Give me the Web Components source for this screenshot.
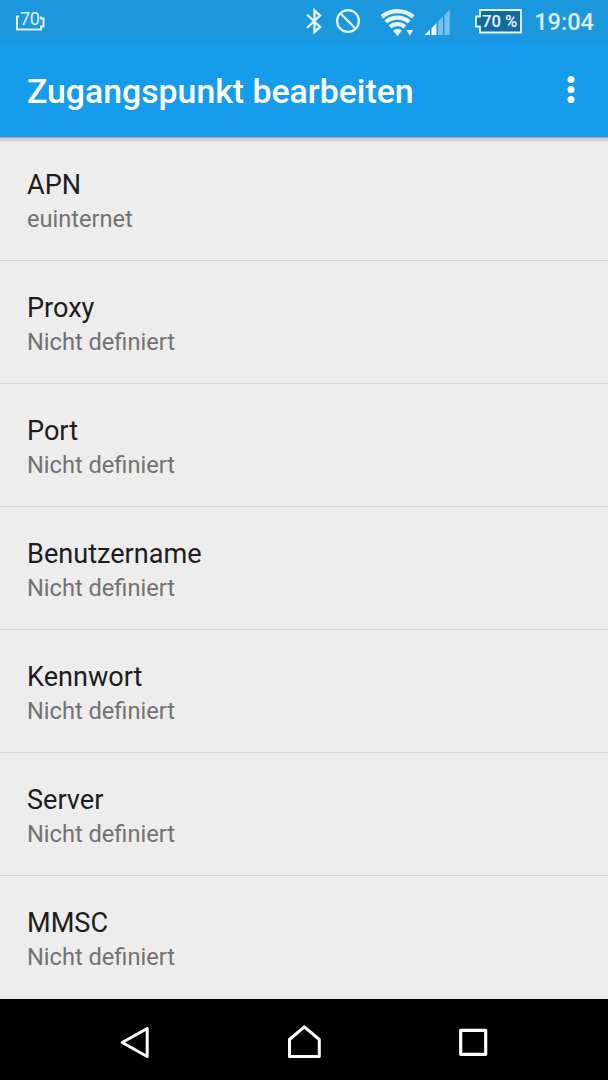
<!DOCTYPE html>
<html lang="de">
<head>
<meta charset="utf-8">
<title>Zugangspunkt bearbeiten</title>
<style>
html,body{margin:0;height:100%;background:#ededed}
body{font-family:Roboto,"Noto Sans",sans-serif;overflow:hidden}
</style>
</head>
<body>
<apn-screen></apn-screen>
<script>
function define(name, html) {
  const t = document.createElement('template');
  t.innerHTML = html;
  customElements.define(name, class extends HTMLElement {
    constructor() {
      super();
      this.attachShadow({ mode: 'open' }).append(t.content.cloneNode(true));
    }
  });
}

define('battery-mini', `
<style>
:host{display:block;width:30px;height:20px;position:relative}
svg{display:block}
span{position:absolute;left:5px;top:-2px;font-size:18px;line-height:18px;letter-spacing:-.4px;color:#e0f1fb;font-weight:400}
</style>
<svg width="30" height="20" viewBox="0 0 30 20" fill="none" stroke="#e4f3fc" stroke-width="2"><path d="M4 4.500H2V17.500H26V14.500H28.500V6.500H26V4.500"/></svg>
<span>70</span>`);

define('battery-level', `
<style>
:host{display:block;width:47px;height:25px;position:relative}
svg{display:block}
span{position:absolute;left:7px;top:2px;width:38px;font-size:16.700px;line-height:21px;font-weight:500;color:#f1f9fe;white-space:nowrap}
</style>
<svg width="47" height="25" viewBox="0 0 47 25"><path d="M5 1H46V23.500H5V17.500H1V7.500H5Z" fill="#126b9f" stroke="#e9f5fc" stroke-width="1.800"/></svg>
<span>70 %</span>`);

define('status-bar', `
<style>
:host{display:flex;height:42px;background:#1b97dd;box-sizing:border-box;padding:0 14px 0 15px;align-items:flex-start}
svg{display:block;flex:none}
battery-mini{margin-top:12px}
.bt{margin:8px 0 0 261px}
.no{margin:8px 0 0 13px}
.wifi{margin:8px 0 0 20px}
.sig{margin:8px 0 0 8px}
battery-level{margin:9px 0 0 24px}
.time{margin:8px 0 0 auto;font-size:23.600px;line-height:28px;font-weight:500;color:#def0fb;white-space:nowrap}
</style>
<battery-mini></battery-mini>
<svg class="bt" width="16" height="27" viewBox="306 8 16 27" fill="none" stroke="#e3f3fc" stroke-width="2.400"><path d="M307 14.500 320 27 314.500 32V10.500L320 15.500 307 28"/></svg>
<svg class="no" width="26" height="26" viewBox="335 8 26 26" fill="none" stroke="#e3f3fc" stroke-width="2.300"><circle cx="348" cy="21" r="10.900"/><path d="M340.300 13.300 355.700 28.700"/></svg>
<svg class="wifi" width="35" height="30" viewBox="381 8 35 30"><g fill="none" stroke="#e8f5fc" stroke-width="4.200"><path d="M381.800 16.800A24.800 24.800 0 0 1 413.200 16.800"/><path d="M385.900 21.800A18.300 18.300 0 0 1 409.100 21.800"/><path d="M390 26.900A11.800 11.800 0 0 1 405 26.900"/></g><path d="M393.100 30.600A7 7 0 0 1 401.900 30.600L397.500 36.300ZM406.700 30H413L409.850 36Z" fill="#e8f5fc"/></svg>
<svg class="sig" width="27" height="28" viewBox="424 8 27 28"><path d="M424.500 35 430 29.500V35ZM431.500 28 436.500 23V35H431.500Z" fill="#f2f9fd"/><path d="M438 21.500 443 16.500V35H438ZM444.500 15 449.700 9.500V35H444.500Z" fill="#75c1ec"/></svg>
<battery-level></battery-level>
<span class="time">19:04</span>`);

define('app-bar', `
<style>
:host{display:flex;height:95px;background:#159ceb;box-sizing:border-box;padding:0 32px 0 27px;justify-content:space-between;position:relative;box-shadow:0 1px 1px #a9abad,0 4px 0 #d0d1d2,0 5px 0 #e4e9eb}
h1{margin:30px 0 0;font-size:33.800px;line-height:40px;font-weight:500;color:#fff;white-space:nowrap}
svg{display:block;margin-top:33px}
</style>
<h1><slot></slot></h1>
<svg width="10" height="30" viewBox="0 0 10 30" fill="#fff"><circle cx="5" cy="4.500" r="3.500"/><circle cx="5" cy="14.500" r="3.500"/><circle cx="5" cy="24.600" r="3.500"/></svg>`);

define('pref-row', `
<style>
:host{display:block;height:123.150px;box-sizing:border-box;padding:31px 27px 0;border-bottom:1px solid #d6d6d6;white-space:nowrap}
.label{font-size:27.100px;line-height:32px;color:#1d1d1d}
.value{font-size:23.600px;line-height:36px;color:#727272}
</style>
<div class="label"><slot></slot></div>
<div class="value"><slot name="value"></slot></div>`);

define('nav-bar', `
<style>
:host{display:flex;flex:none;height:81px;background:#000;padding:0 119px 0 118px;box-sizing:border-box;justify-content:space-between;align-items:flex-start}
svg{display:block;margin-top:25px}
</style>
<svg width="33" height="36" viewBox="118 1024 33 36" fill="none" stroke="#fff" stroke-width="3" stroke-linejoin="round"><path d="M147.200 1028.500V1056.500L122.200 1042.500Z"/></svg>
<svg width="36" height="36" viewBox="286 1024 36 36" fill="none" stroke="#fff" stroke-width="3" stroke-linejoin="round"><path d="M289.500 1039.500 304.300 1026.800 319.300 1039.500V1056.500H289.500Z"/></svg>
<svg width="32" height="36" viewBox="457 1024 32 36" fill="none" stroke="#fff" stroke-width="3.200" stroke-linejoin="round"><rect x="460.700" y="1030.300" width="25" height="24"/></svg>`);

define('apn-screen', `
<style>
:host{display:flex;flex-direction:column;width:608px;height:1080px;background:#ededed;overflow:hidden}
status-bar,app-bar{flex:none}
main{flex:1;min-height:0;overflow:hidden;padding-top:.600px}
pref-row:last-child{border-bottom-color:transparent}
</style>
<status-bar></status-bar>
<app-bar>Zugangspunkt bearbeiten</app-bar>
<main>
<pref-row>APN<span slot="value">euinternet</span></pref-row>
<pref-row>Proxy<span slot="value">Nicht definiert</span></pref-row>
<pref-row>Port<span slot="value">Nicht definiert</span></pref-row>
<pref-row>Benutzername<span slot="value">Nicht definiert</span></pref-row>
<pref-row>Kennwort<span slot="value">Nicht definiert</span></pref-row>
<pref-row>Server<span slot="value">Nicht definiert</span></pref-row>
<pref-row>MMSC<span slot="value">Nicht definiert</span></pref-row>
</main>
<nav-bar></nav-bar>`);
</script>
</body>
</html>
